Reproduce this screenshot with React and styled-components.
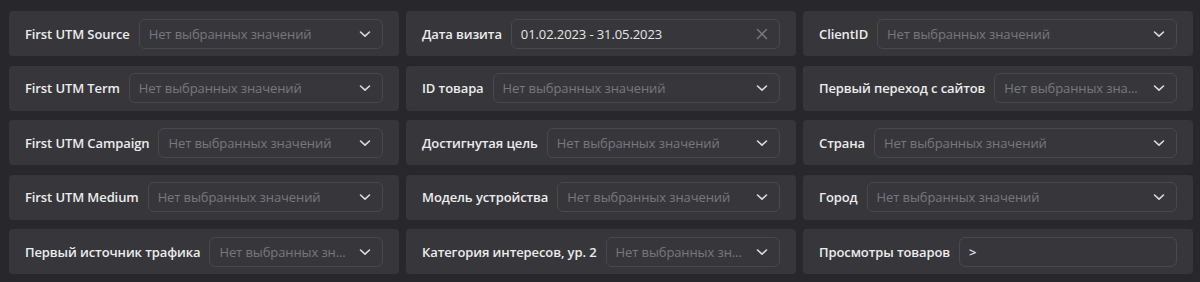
import React from "react";
import styled, { createGlobalStyle } from "styled-components";

const Global = createGlobalStyle`
  html, body { margin: 0; padding: 0; background: #28282c; }
  body { font-family: "Open Sans", "Noto Sans", sans-serif; -webkit-font-smoothing: antialiased; }
`;

const Grid = styled.div`
  display: grid;
  grid-template-columns: repeat(3, 390px);
  column-gap: 7px;
  row-gap: 9.5px;
  padding: 11px 7px 8px 9px;
`;

const Card = styled.div`
  height: 45px;
  box-sizing: border-box;
  background: #37373b;
  border-radius: 4px;
  display: flex;
  align-items: center;
  padding: 0 16px;
  gap: 9px;
`;

const Label = styled.span`
  color: #ececec;
  font-size: 13px;
  font-weight: 600;
  white-space: nowrap;
  letter-spacing: -0.1px;
`;

const Field = styled.div`
  flex: 1;
  min-width: 0;
  height: 30px;
  box-sizing: border-box;
  border: 1px solid #48484d;
  border-radius: 6px;
  display: flex;
  align-items: center;
  padding: 0 11px 0 9px;
  gap: 8px;
`;

const Value = styled.span`
  flex: 1;
  min-width: 0;
  font-size: 13px;
  color: ${(p) => (p.$empty ? "#77777c" : "#e6e6e6")};
  font-weight: ${(p) => (p.$strong ? 600 : 400)};
  white-space: nowrap;
  overflow: hidden;
  text-overflow: ellipsis;
  letter-spacing: -0.1px;
`;

const Icon = styled.svg`
  flex: none;
  width: 12px;
  height: 12px;
`;

const Chevron = () => (
  <Icon viewBox="0 0 12 12">
    <path d="M1.5 4 L6 8.2 L10.5 4" fill="none" stroke="#dcdcdc" strokeWidth="1.6" strokeLinecap="round" strokeLinejoin="round" />
  </Icon>
);

const Cross = () => (
  <Icon viewBox="0 0 12 12">
    <path d="M1.5 1.5 L10.5 10.5 M10.5 1.5 L1.5 10.5" fill="none" stroke="#7c7c80" strokeWidth="1.4" strokeLinecap="round" />
  </Icon>
);

const PH = "Нет выбранных значений";
const PHS = "Нет выбранных зна...";

const items = [
  { label: "First UTM Source", value: PH },
  { label: "Дата визита", value: "01.02.2023 - 31.05.2023", kind: "date" },
  { label: "ClientID", value: PH },
  { label: "First UTM Term", value: PH },
  { label: "ID товара", value: PH },
  { label: "Первый переход с сайтов", value: PHS },
  { label: "First UTM Campaign", value: PH },
  { label: "Достигнутая цель", value: PH },
  { label: "Страна", value: PH },
  { label: "First UTM Medium", value: PH },
  { label: "Модель устройства", value: PH },
  { label: "Город", value: PH },
  { label: "Первый источник трафика", value: "Нет выбранных зн..." },
  { label: "Категория интересов, ур. 2", value: "Нет выбранных зн..." },
  { label: "Просмотры товаров", value: ">", kind: "input" },
];

export default function App() {
  return (
    <>
      <Global />
      <Grid>
        {items.map((it) => (
          <Card key={it.label}>
            <Label>{it.label}</Label>
            <Field>
              <Value $empty={!it.kind} $strong={it.kind === "input"}>{it.value}</Value>
              {it.kind === "date" ? <Cross /> : it.kind === "input" ? null : <Chevron />}
            </Field>
          </Card>
        ))}
      </Grid>
    </>
  );
}
